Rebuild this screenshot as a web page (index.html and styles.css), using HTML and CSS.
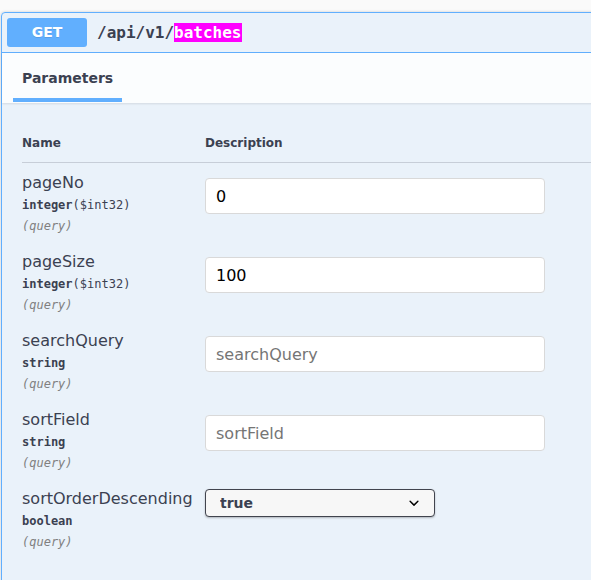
FILE: index.html
```html
<!DOCTYPE html>
<html>
<head>
<meta charset="utf-8">
<link rel="stylesheet" href="styles.css">
</head>
<body>
<div class="opblock">
  <div class="summary">
    <span class="method">GET</span>
    <span class="path">/api/v1/<mark class="hl">batches</mark></span>
  </div>
  <div class="section-header">
    <div class="tab-item"><h4 class="tab-title">Parameters</h4></div>
  </div>
  <div class="table-container">
    <div class="thead">
      <div class="th">Name</div>
      <div class="th">Description</div>
    </div>
    <div class="row">
      <div class="pname">
        <div class="name">pageNo</div>
        <div class="type">integer<span class="fmt">($int32)</span></div>
        <div class="in">(query)</div>
      </div>
      <div class="desc"><input class="field" type="text" value="0" placeholder="pageNo"></div>
    </div>
    <div class="row">
      <div class="pname">
        <div class="name">pageSize</div>
        <div class="type">integer<span class="fmt">($int32)</span></div>
        <div class="in">(query)</div>
      </div>
      <div class="desc"><input class="field" type="text" value="100" placeholder="pageSize"></div>
    </div>
    <div class="row">
      <div class="pname">
        <div class="name">searchQuery</div>
        <div class="type">string</div>
        <div class="in">(query)</div>
      </div>
      <div class="desc"><input class="field" type="text" placeholder="searchQuery"></div>
    </div>
    <div class="row">
      <div class="pname">
        <div class="name">sortField</div>
        <div class="type">string</div>
        <div class="in">(query)</div>
      </div>
      <div class="desc"><input class="field" type="text" placeholder="sortField"></div>
    </div>
    <div class="row">
      <div class="pname">
        <div class="name">sortOrderDescending</div>
        <div class="type">boolean</div>
        <div class="in">(query)</div>
      </div>
      <div class="desc">
        <select class="select">
          <option>--</option>
          <option selected>true</option>
          <option>false</option>
        </select>
      </div>
    </div>
  </div>
</div>
</body>
</html>
```

FILE: styles.css
```css
html, body {
  margin: 0;
  padding: 0;
}
body {
  background: #fafafa;
  font-family: "DejaVu Sans", sans-serif;
  color: #3b4151;
  overflow: hidden;
  width: 591px;
  height: 580px;
}
.opblock {
  margin: 12px 0 0 1px;
  width: 680px;
  min-height: 700px;
  border: 1px solid #61affe;
  background: rgba(97, 175, 254, 0.1);
  box-shadow: 0 0 3px rgba(0, 0, 0, 0.19);
  border-radius: 4px 0 0 0;
}
.summary {
  display: flex;
  align-items: center;
  padding: 5px;
  border-bottom: 1px solid #61affe;
}
.method {
  min-width: 80px;
  padding: 6px 0;
  text-align: center;
  background: #61affe;
  color: #fff;
  font-size: 14px;
  font-weight: 700;
  line-height: 17px;
  border-radius: 3px;
  text-shadow: 0 1px 0 rgba(0, 0, 0, 0.1);
}
.path {
  margin-left: 10px;
  font-family: "DejaVu Sans Mono", monospace;
  font-size: 16px;
  font-weight: 700;
  color: #3b4151;
}
.hl {
  background: #ff00ff;
  color: #fff;
}
.section-header {
  display: flex;
  height: 50px;
  padding: 0 20px;
  background: rgba(255, 255, 255, 0.8);
  box-shadow: 0 1px 2px rgba(0, 0, 0, 0.1);
}
.tab-item {
  position: relative;
  display: flex;
  align-items: center;
}
.tab-item::after {
  content: "";
  position: absolute;
  left: -10%;
  width: 120%;
  bottom: 1px;
  height: 4px;
  background: #61affe;
}
.tab-title {
  margin: 0;
  font-size: 14px;
  font-weight: 700;
  line-height: 17px;
}
.table-container {
  padding: 21px 0 0 20px;
}
.thead {
  display: grid;
  grid-template-columns: 183px 1fr;
  border-bottom: 1px solid rgba(59, 65, 81, 0.2);
}
.th {
  padding: 12px 0;
  font-size: 12px;
  font-weight: 700;
  line-height: 14px;
}
.row {
  display: grid;
  grid-template-columns: 183px 1fr;
  padding: 10px 0 9px;
}
.name {
  font-size: 16px;
  line-height: 19px;
}
.type {
  padding: 6px 0 5px;
  font-family: "DejaVu Sans Mono", monospace;
  font-size: 12px;
  font-weight: 700;
  line-height: 14px;
}
.fmt {
  font-weight: 400;
}
.in {
  padding-top: 2px;
  font-family: "DejaVu Sans Mono", monospace;
  font-size: 12px;
  font-style: italic;
  line-height: 14px;
  color: #808080;
}
.field {
  display: block;
  box-sizing: border-box;
  margin-top: 5px;
  width: 340px;
  height: 36px;
  padding: 8px 10px;
  border: 1px solid #d9d9d9;
  border-radius: 4px;
  background: #fff;
  font-family: "DejaVu Sans", sans-serif;
  font-size: 16px;
  color: #000;
  outline: none;
}
.field::placeholder {
  color: #757575;
}
.select {
  display: block;
  box-sizing: border-box;
  width: 230px;
  height: 28px;
  padding: 4px 40px 4px 14px;
  border: 1px solid #41444e;
  border-radius: 4px;
  box-shadow: 0 1px 2px 0 rgba(0, 0, 0, 0.25);
  font-family: "DejaVu Sans", sans-serif;
  font-size: 14px;
  font-weight: 700;
  color: #3b4151;
  -webkit-appearance: none;
  appearance: none;
  background: #f7f7f7 url("data:image/svg+xml;charset=utf-8,%3Csvg xmlns='http://www.w3.org/2000/svg' viewBox='0 0 20 20'%3E%3Cpath d='M13.418 7.859a.695.695 0 01.978 0 .68.68 0 010 .969l-3.908 3.83a.697.697 0 01-.979 0l-3.908-3.83a.68.68 0 010-.969.695.695 0 01.978 0L10 11l3.418-3.141z'/%3E%3C/svg%3E") right 10px center / 20px no-repeat;
}
```
